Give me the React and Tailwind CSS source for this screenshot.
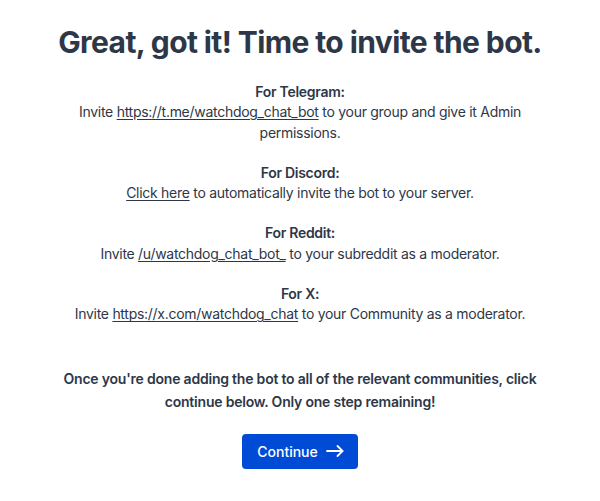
const Section = ({ title, children }) => (
  <div className="mb-5">
    <p className="font-semibold">{title}</p>
    <p>{children}</p>
  </div>
);

const Link = ({ children }) => (
  <a href="#" className="underline underline-offset-2">
    {children}
  </a>
);

export default function App() {
  return (
    <div
      className="min-h-[501px] bg-white text-[#2d3748] flex flex-col items-center px-6 pt-[22px]"
      style={{ fontFamily: "Inter, 'Noto Sans', sans-serif" }}
    >
      <h1 className="text-[30px] font-bold tracking-[-0.02em] leading-10 text-center">
        Great, got it! Time to invite the bot.
      </h1>

      <div className="mt-[20px] text-[14px] tracking-[-0.02em] leading-[20.3px] text-center w-[480px]">
        <Section title="For Telegram:">
          Invite <Link>https://t.me/watchdog_chat_bot</Link> to your group and give it Admin permissions.
        </Section>
        <Section title="For Discord:">
          <Link>Click here</Link> to automatically invite the bot to your server.
        </Section>
        <Section title="For Reddit:">
          Invite <Link>/u/watchdog_chat_bot_</Link> to your subreddit as a moderator.
        </Section>
        <Section title="For X:">
          Invite <Link>https://x.com/watchdog_chat</Link> to your Community as a moderator.
        </Section>
      </div>

      <p className="mt-[22px] text-[14px] tracking-[-0.015em] leading-[23px] font-semibold text-center w-[500px]">
        Once you're done adding the bot to all of the relevant communities, click continue below. Only one step remaining!
      </p>

      <button className="mt-[21px] flex items-center gap-[8px] bg-[#004bd6] text-white text-[14px] font-medium rounded-[4px] h-[35px] pl-[15px] pr-[14px]">
        Continue
        <svg width="18" height="14" viewBox="0 0 18 14" fill="none" stroke="currentColor" strokeWidth="1.8" strokeLinecap="round" strokeLinejoin="round">
          <path d="M1 7h15.5" />
          <path d="M11.5 2l5 5-5 5" />
        </svg>
      </button>
    </div>
  );
}
